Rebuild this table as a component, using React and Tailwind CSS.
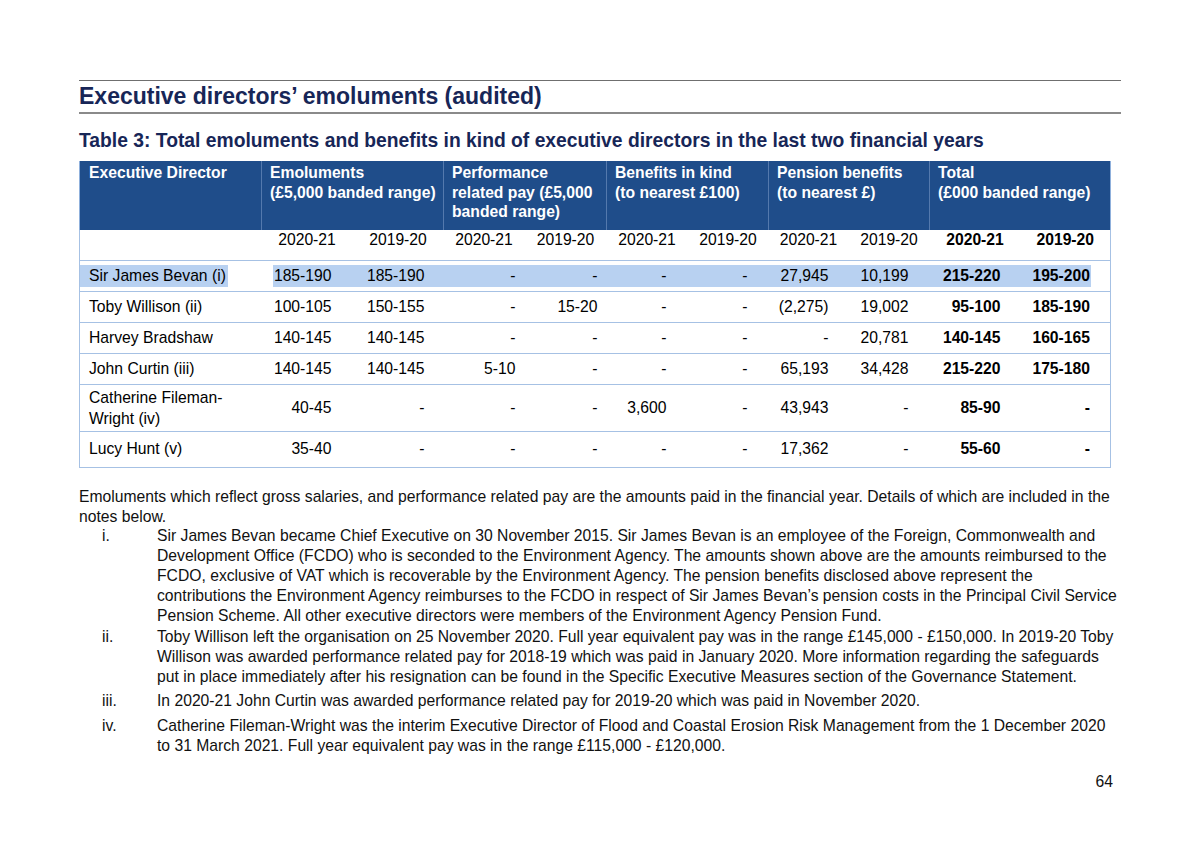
import React from "react";

const pads = ["pr-[21px]", "pr-[19px]", "pr-[9px]", "pr-[9px]", "pr-[21px]", "pr-[21px]", "pr-[20px]", "pr-[21px]", "pr-[20px]", "pr-[20px]"];

const rows = [
  { name: "Sir James Bevan (i)", vals: ["185-190", "185-190", "-", "-", "-", "-", "27,945", "10,199", "215-220", "195-200"], sel: true },
  { name: "Toby Willison (ii)", vals: ["100-105", "150-155", "-", "15-20", "-", "-", "(2,275)", "19,002", "95-100", "185-190"] },
  { name: "Harvey Bradshaw", vals: ["140-145", "140-145", "-", "-", "-", "-", "-", "20,781", "140-145", "160-165"] },
  { name: "John Curtin (iii)", vals: ["140-145", "140-145", "5-10", "-", "-", "-", "65,193", "34,428", "215-220", "175-180"] },
  { name: ["Catherine Fileman-", "Wright (iv)"], vals: ["40-45", "-", "-", "-", "3,600", "-", "43,943", "-", "85-90", "-"], tall: true },
  { name: "Lucy Hunt (v)", vals: ["35-40", "-", "-", "-", "-", "-", "17,362", "-", "55-60", "-"], last: true },
];

const groups = [
  ["Emoluments", "(£5,000 banded range)"],
  ["Performance", "related pay (£5,000", "banded range)"],
  ["Benefits in kind", "(to nearest £100)"],
  ["Pension benefits", "(to nearest £)"],
  ["Total", "(£000 banded range)"],
];

const years = ["2020-21", "2019-20", "2020-21", "2019-20", "2020-21", "2019-20", "2020-21", "2019-20", "2020-21", "2019-20"];

function DataCell({ v, i, sel }) {
  const bold = i >= 8 ? "font-bold" : "";
  if (sel) {
    const edge = i === 0 ? "ml-[11px]" : i === 9 ? "mr-[19px]" : "";
    const pad = i === 9 ? "pr-[1px]" : pads[i];
    return (
      <td className="p-0 align-middle">
        <div className={`h-[22px] leading-[22px] whitespace-nowrap bg-[#b8d1f1] text-right ${edge} ${pad} ${bold}`}>{v}</div>
      </td>
    );
  }
  return (
    <td className="p-0 align-middle">
      <div className={`h-[22px] leading-[22px] whitespace-nowrap text-right ${pads[i]} ${bold}`}>{v}</div>
    </td>
  );
}

export default function App() {
  return (
    <div className="min-h-[846px] bg-white font-['Liberation_Sans',Arial,sans-serif] text-black">
      <div className="pt-[80px] pl-[79px] w-[1121px]">
        <div className="h-px bg-[#6f6f6f]" />
        <div className="h-[31px] flex items-center text-[23px] font-bold text-[#172657] leading-none">
          Executive directors’ emoluments (audited)
        </div>
        <div className="h-[2px] bg-[#8a8a8a]" />
        <div className="mt-[15px] text-[19.3px] leading-[24px] font-bold text-[#172657]">
          Table 3: Total emoluments and benefits in kind of executive directors in the last two financial years
        </div>

        <table className="mt-[8px] table-fixed w-[1032px] border-collapse text-[15.7px]">
          <colgroup>
            <col className="w-[182px]" />
            <col className="w-[91px]" />
            <col className="w-[91px]" />
            <col className="w-[81px]" />
            <col className="w-[82px]" />
            <col className="w-[81px]" />
            <col className="w-[81px]" />
            <col className="w-[80px]" />
            <col className="w-[81px]" />
            <col className="w-[91px]" />
            <col className="w-[90px]" />
          </colgroup>
          <thead>
            <tr className="h-[69px] bg-[#1f4d8a] text-white text-[15.7px] font-bold leading-[19.5px]">
              <th className="align-top text-left font-bold pl-[9px] pt-[2px] border-l border-[#8fb0dc]">
                Executive Director
              </th>
              {groups.map((g, gi) => (
                <th
                  key={gi}
                  colSpan={2}
                  className={`align-top text-left font-bold pl-[8px] pt-[2px] border-l border-[#5479ad] ${gi === 4 ? "border-r border-r-[#8fb0dc]" : ""}`}
                >
                  {g.map((l, li) => (
                    <div key={li} className="whitespace-nowrap">{l}</div>
                  ))}
                </th>
              ))}
            </tr>
          </thead>
          <tbody>
            <tr className="h-[30px] border-x border-b border-[#a6c1e4]">
              <td />
              {years.map((y, i) => (
                <td key={i} className={`align-top text-center leading-[19px] p-0 ${i >= 8 ? "font-bold" : ""}`}>
                  {y}
                </td>
              ))}
            </tr>
            {rows.map((r, ri) => (
              <tr
                key={ri}
                className={`border-x border-b border-[#a6c1e4] ${r.tall ? "h-[47px]" : r.last ? "h-[36px]" : "h-[31px]"}`}
              >
                <td className="p-0 align-middle">
                  {Array.isArray(r.name) ? (
                    <div className="pl-[9px] leading-[21px]">
                      {r.name.map((n, ni) => (
                        <div key={ni}>{n}</div>
                      ))}
                    </div>
                  ) : r.sel ? (
                    <div className="h-[22px] leading-[22px]">
                      <span className="inline-block bg-[#b8d1f1] pl-[9px] pr-[2px]">{r.name}</span>
                    </div>
                  ) : (
                    <div className="h-[22px] leading-[22px] pl-[9px]">{r.name}</div>
                  )}
                </td>
                {r.vals.map((v, i) => (
                  <DataCell key={i} v={v} i={i} sel={r.sel} />
                ))}
              </tr>
            ))}
          </tbody>
        </table>

        <div className="mt-[19px] text-[15.7px] leading-[20px] text-[#111]">
          <p className="whitespace-nowrap">
            Emoluments which reflect gross salaries, and performance related pay are the amounts paid in the financial year. Details of which are included in the
            <br />
            notes below.
          </p>
          <ol className="whitespace-nowrap">
            <li className="flex -mt-[1px]">
              <span className="w-[78px] pl-[23px] shrink-0">i.</span>
              <span>
                Sir James Bevan became Chief Executive on 30 November 2015. Sir James Bevan is an employee of the Foreign, Commonwealth and
                <br />
                Development Office (FCDO) who is seconded to the Environment Agency. The amounts shown above are the amounts reimbursed to the
                <br />
                FCDO, exclusive of VAT which is recoverable by the Environment Agency. The pension benefits disclosed above represent the
                <br />
                contributions the Environment Agency reimburses to the FCDO in respect of Sir James Bevan’s pension costs in the Principal Civil Service
                <br />
                Pension Scheme. All other executive directors were members of the Environment Agency Pension Fund.
              </span>
            </li>
            <li className="flex mt-[1px]">
              <span className="w-[78px] pl-[23px] shrink-0">ii.</span>
              <span>
                Toby Willison left the organisation on 25 November 2020. Full year equivalent pay was in the range £145,000 - £150,000. In 2019-20 Toby
                <br />
                Willison was awarded performance related pay for 2018-19 which was paid in January 2020. More information regarding the safeguards
                <br />
                put in place immediately after his resignation can be found in the Specific Executive Measures section of the Governance Statement.
              </span>
            </li>
            <li className="flex mt-[4px]">
              <span className="w-[78px] pl-[23px] shrink-0">iii.</span>
              <span>In 2020-21 John Curtin was awarded performance related pay for 2019-20 which was paid in November 2020.</span>
            </li>
            <li className="flex mt-[5px]">
              <span className="w-[78px] pl-[23px] shrink-0">iv.</span>
              <span>
                Catherine Fileman-Wright was the interim Executive Director of Flood and Coastal Erosion Risk Management from the 1 December 2020
                <br />
                to 31 March 2021. Full year equivalent pay was in the range £115,000 - £120,000.
              </span>
            </li>
          </ol>
          <div className="mt-[16px] flex justify-end pr-[8px]">64</div>
        </div>
      </div>
    </div>
  );
}
